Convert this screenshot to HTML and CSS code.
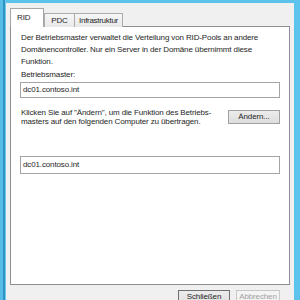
FILE: index.html
```html
<!DOCTYPE html>
<html>
<head>
<meta charset="utf-8">
<link rel="stylesheet" href="styles.css">
</head>
<body>
<div class="frame">
  <div class="dialog">
    <div class="tabs">
      <div class="tab active">RID</div>
      <div class="tab">PDC</div>
      <div class="tab">Infrastruktur</div>
    </div>
    <div class="panel">
      <p class="text intro">Der Betriebsmaster verwaltet die Verteilung von RID-Pools an andere Domänencontroller. Nur ein Server in der Domäne übernimmt diese Funktion.</p>
      <p class="text label">Betriebsmaster:</p>
      <div class="field">dc01.contoso.int</div>
      <div class="change-row">
        <p class="text change-text">Klicken Sie auf "Ändern", um die Funktion des Betriebs-<br>masters auf den folgenden Computer zu übertragen.</p>
        <div class="btn change-btn">Ändern...</div>
      </div>
      <div class="field second">dc01.contoso.int</div>
    </div>
    <div class="footer">
      <div class="btn default">Schließen</div>
      <div class="btn disabled">Abbrechen</div>
    </div>
  </div>
</div>
</body>
</html>
```
FILE: styles.css
```css
html, body {
  margin: 0;
  padding: 0;
  width: 300px;
  height: 300px;
  overflow: hidden;
}
body {
  background: #5cc4ec;
  font-family: "Liberation Sans", Arial, sans-serif;
  font-size: 8px;
  letter-spacing: -0.13px;
  color: #262626;
}
.frame {
  height: 300px;
  padding-top: 3px;
  box-sizing: border-box;
  background: linear-gradient(to right, #58bde6 0, #58bde6 3px, #2f93c4 3px, #2f93c4 5px, #6ccbf0 5px, #6ccbf0 6px, transparent 6px);
  display: flex;
}
.dialog {
  margin-left: 6px;
  width: 288px;
  height: 297px;
  background: #f0f0f0;
  box-sizing: border-box;
  padding: 5px 4px 0 4px;
  display: flex;
  flex-direction: column;
}
.tabs {
  display: flex;
  align-items: flex-end;
  height: 19px;
  flex-shrink: 0;
  position: relative;
  z-index: 1;
  margin-bottom: -1px;
}
.tab {
  height: 14px;
  box-sizing: border-box;
  border: 1px solid #acacac;
  border-bottom: none;
  background: linear-gradient(#f6f6f6, #e9e9e9);
  line-height: 13px;
  margin-left: -1px;
  text-align: center;
  white-space: nowrap;
}
.tab:first-child { margin-left: 0; }
.tab.active {
  height: 19px;
  background: #fff;
  border-color: #a6a6a6;
  line-height: 17px;
  width: 34px;
  text-align: left;
  padding-left: 6px;
  margin-right: 1px;
}
.tab:nth-child(2) { width: 31px; }
.tab:nth-child(3) { width: 49px; letter-spacing: -0.3px; }
.panel {
  height: 259px;
  flex-shrink: 0;
  box-sizing: border-box;
  background: #fff;
  border: 1px solid #8e8f94;
  padding: 5px 9px 0 9px;
}
.text {
  margin: 0;
  padding-left: 1px;
  line-height: 12px;
}
.label {
  margin-top: 1px;
}
.field {
  height: 16px;
  box-sizing: border-box;
  border: 1px solid #a4a4a4;
  padding-left: 2px;
  line-height: 14px;
  margin-top: 1px;
}
.change-row {
  display: flex;
  align-items: center;
  justify-content: space-between;
  margin-top: 10px;
}
.change-text {
  line-height: 9px;
}
.btn {
  box-sizing: border-box;
  border: 1px solid #adadad;
  background: linear-gradient(#ececec, #dedede);
  text-align: center;
  line-height: 12px;
}
.change-btn {
  width: 52px;
  height: 14px;
  border-color: #a0a0a0;
}
.field.second {
  margin-top: 30px;
  height: 18px;
  line-height: 16px;
}
.footer {
  display: flex;
  flex-shrink: 0;
  justify-content: flex-end;
  gap: 6px;
  padding-top: 5px;
  padding-right: 10px;
}
.footer .btn {
  height: 16px;
}
.btn.default {
  width: 52px;
  border-color: #707070;
}
.btn.disabled {
  width: 44px;
  color: #a0a0a0;
  border-color: #c8c8c8;
  background: #f4f4f4;
}
```
